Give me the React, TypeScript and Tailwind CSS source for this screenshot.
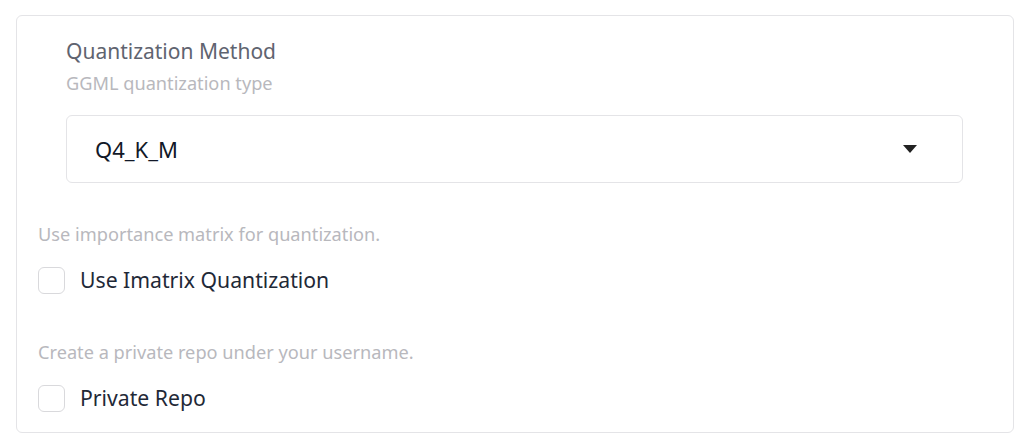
import React from 'react';

const font = { fontFamily: '"Noto Sans", "Open Sans", sans-serif', fontVariantLigatures: 'none' as const };

function Checkbox({ label, info }: { label: string; info: string }) {
  return (
    <div className="flex flex-col">
      <p className="text-[18.2px] leading-[24px] text-[#b8b8bd]">{info}</p>
      <label className="mt-[20px] flex items-center gap-[15px]">
        <span className="w-[27px] h-[27px] rounded-[6px] border border-[#d9d9dc] bg-white shrink-0" />
        <span className="text-[21.2px] leading-[28px] text-[#1f2937]">{label}</span>
      </label>
    </div>
  );
}

export default function App() {
  return (
    <div className="w-[1024px] h-[446px] bg-white pl-[16px] pt-[15px]" style={font}>
      <div className="w-[998px] h-[418px] rounded-[6px] border border-[#e4e4e7] flex flex-col">
        <div className="pl-[49px] pr-[50px] pt-[21px]">
          <h2 className="text-[21px] leading-[28px] text-[#5f6470]">Quantization Method</h2>
          <p className="mt-[6px] text-[18.2px] leading-[24px] text-[#b8b8bd]">GGML quantization type</p>
          <div className="mt-[20px] h-[68px] rounded-[6px] border border-[#e4e4e7] flex items-center justify-between pl-[28px] pr-[45px]">
            <span className="text-[22px] leading-[28px] text-[#111827]">Q4_K_M</span>
            <svg width="14" height="9" viewBox="0 0 14 9">
              <path d="M0 0 L14 0 L7 8 Z" fill="#222" />
            </svg>
          </div>
        </div>
        <div className="pl-[21px] mt-[39px] flex flex-col gap-[46px]">
          <Checkbox info="Use importance matrix for quantization." label="Use Imatrix Quantization" />
          <Checkbox info="Create a private repo under your username." label="Private Repo" />
        </div>
      </div>
    </div>
  );
}
